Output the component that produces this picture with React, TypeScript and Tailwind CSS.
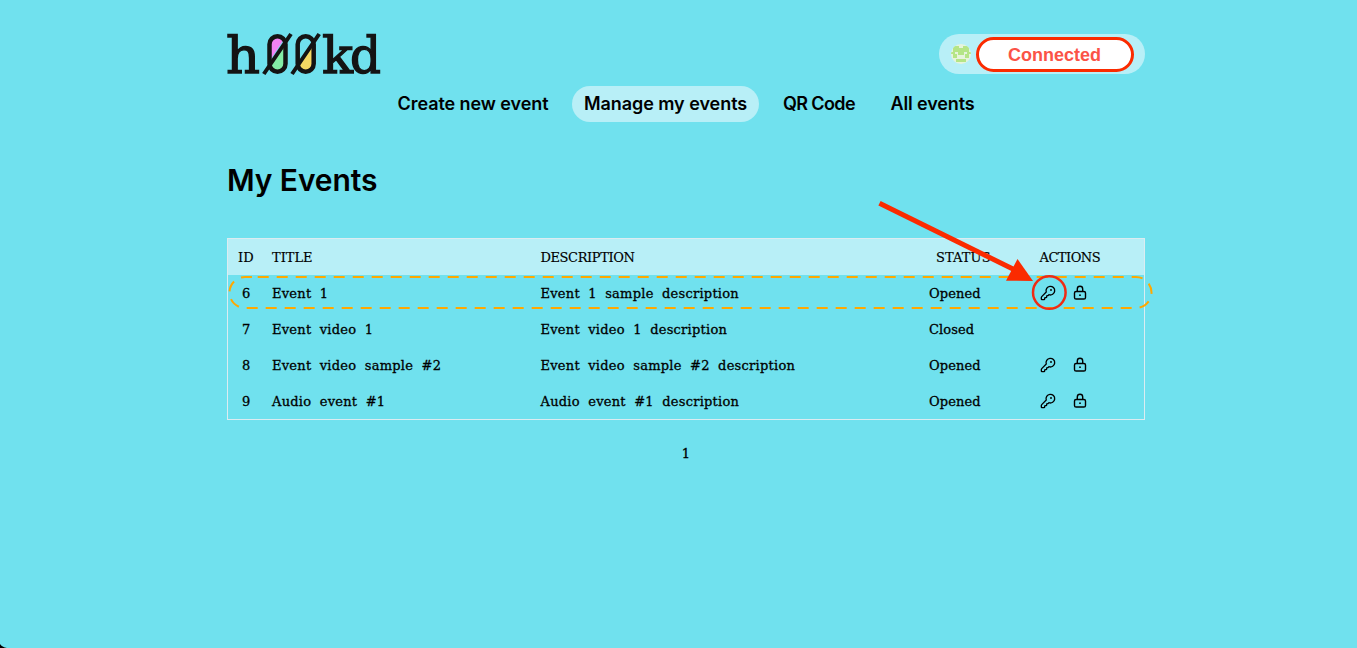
import { LuKeyRound } from "react-icons/lu";

type EventRow = {
  id: number;
  title: string;
  description: string;
  status: "Opened" | "Closed";
};

const EVENTS: EventRow[] = [
  { id: 6, title: "Event 1", description: "Event 1 sample description", status: "Opened" },
  { id: 7, title: "Event video 1", description: "Event video 1 description", status: "Closed" },
  { id: 8, title: "Event video sample #2", description: "Event video sample #2 description", status: "Opened" },
  { id: 9, title: "Audio event #1", description: "Audio event #1 description", status: "Opened" },
];

const NAV = [
  { label: "Create new event", style: "w-[174px] tracking-[-0.08px]" },
  { label: "Manage my events", style: "w-[187px] bg-[#b8eff7] tracking-[-0.05px]" },
  { label: "QR Code", style: "w-[96px] tracking-[-0.6px]" },
  { label: "All events", style: "w-[107px] tracking-[-0.15px]" },
];

const COLUMNS = "grid grid-cols-[44px_268.500px_388.500px_110.500px_1fr] items-center pt-0.5";

function Logo() {
  return (
    <svg width="160" height="64" viewBox="-2 -10 160 64" className="-ml-1 block shrink-0" aria-label="h00kd">
      <g fill="#141414" stroke="#141414" strokeWidth="1.300" fontFamily="'DejaVu Serif', serif" fontSize="50">
        <text x="1" y="41" textLength="34" lengthAdjust="spacingAndGlyphs">h</text>
        <text x="97" y="41" textLength="31" lengthAdjust="spacingAndGlyphs">k</text>
        <text x="125" y="41" textLength="31" lengthAdjust="spacingAndGlyphs">d</text>
      </g>
      <path d="M44 30V12q0-7 7.500-7 5 0 7 3Z" fill="#f183f3" />
      <path d="M60 12v20q0 7-7.500 7-6 0-8-5Z" fill="#83eda6" />
      <path d="M88 12v20q0 7-7.500 7-6 0-8-5Z" fill="#f5d963" />
      <g fill="none" stroke="#141414" strokeWidth="4.500">
        <rect x="44.500" y="4.300" width="16" height="35.500" rx="8" />
        <rect x="72.700" y="4.300" width="16" height="35.500" rx="8" />
        <path d="M38.800 42 66 2M67 42 94.200 2" strokeWidth="4" />
      </g>
    </svg>
  );
}

function Avatar() {
  return (
    <svg width="20" height="20" viewBox="0 0 20 20" className="block">
      <clipPath id="avatar">
        <circle cx="10" cy="10" r="10" />
      </clipPath>
      <g clipPath="url(#avatar)">
        <path fill="#e6f4dc" d="M0 0h20v20H0z" />
        <path
          fill="#b5e586"
          d="M2 2h6v2h4V2h6v6h2v2h-2v2h-4v-2h2V8h-3v3H7V8H4v2h2v2H2v-2H0V8h2zM5 15h10v3H5zM2 12h4v2H2zM14 12h4v2h-4z"
        />
      </g>
    </svg>
  );
}

function LockIcon() {
  return (
    <svg width="16" height="16" viewBox="0 0 16 16" fill="none" stroke="black" strokeWidth="1.400" className="block">
      <rect x="2.500" y="6.500" width="11" height="7.500" rx="1.600" />
      <path d="M5.300 6.500V4a2.700 2.700 0 0 1 5.400 0v2.500" />
      <circle cx="8" cy="10.200" r="0.900" fill="black" stroke="none" />
    </svg>
  );
}

function Highlights() {
  return (
    <svg width="290" height="125" viewBox="870 195 290 125" className="pointer-events-none absolute left-[870px] top-[195px]">
      <path d="M879.500 203.300 1016 270.500" stroke="#fb2b00" strokeWidth="5" />
      <path d="m1017.500 259 15.500 22-27-.3Z" fill="#fb2b00" />
      <circle cx="1049.300" cy="292.500" r="16.300" fill="none" stroke="#ef2b14" strokeWidth="2.500" />
    </svg>
  );
}

function RowOutline() {
  return (
    <svg width="930" height="40" viewBox="226 273 930 40" className="pointer-events-none absolute left-[226px] top-[273px]">
      <path
        d="M257.700 277H1136a15.500 15.500 0 0 1 0 31H245a15.500 15.500 0 0 1 0-31Z"
        fill="none"
        stroke="#ffa800"
        strokeWidth="2"
        strokeDasharray="11 8"
      />
    </svg>
  );
}

export default function App() {
  return (
    <div className="relative h-[648px] w-full overflow-hidden bg-[#70e1ee] text-black">
      <div className="ml-[227px] w-[918px] pt-8">
        <header className="flex h-11 items-center justify-between">
          <Logo />
          <div className="flex h-10 w-[206px] items-center rounded-full bg-[#b8eff7] pl-3">
            <Avatar />
            <div className="ml-[5px] flex h-[35px] w-[158px] items-center justify-center rounded-full border-3 border-[#fb2b00] bg-white pr-px pt-0.5 font-['Liberation_Sans',sans-serif] text-[18px] font-bold text-[#fb5347]">
              Connected
            </div>
          </div>
        </header>

        <nav className="mt-2.5 flex h-9 justify-center gap-3 font-['Inter',sans-serif] text-[18px] font-semibold">
          {NAV.map((item) => (
            <a key={item.label} className={`flex items-center justify-center whitespace-nowrap rounded-full pb-px ${item.style}`}>
              {item.label}
            </a>
          ))}
        </nav>

        <h1 className="mt-10 font-['Inter',sans-serif] text-[30px] font-semibold leading-9 tracking-[-0.1px]">My Events</h1>

        <div className="mt-10 border border-[#dcecf1] font-['DejaVu_Serif',serif] text-[13px]">
          <div className={`${COLUMNS} h-9 bg-[#b8eff7] [-webkit-text-stroke:0.15px_black]`}>
            <span className="pl-2.5">ID</span>
            <span>TITLE</span>
            <span className="tracking-[-0.4px]">DESCRIPTION</span>
            <span className="pl-[7px] tracking-[0.1px]">STATUS</span>
            <span className="tracking-[-0.5px]">ACTIONS</span>
          </div>
          {EVENTS.map((event) => (
            <div
              key={event.id}
              className={`${COLUMNS} h-9 tracking-[0.25px] [word-spacing:4px] [-webkit-text-stroke:0.3px_black]`}
            >
              <span className="pl-3.5">{event.id}</span>
              <span>{event.title}</span>
              <span>{event.description}</span>
              <span className="tracking-[0.1px]">{event.status}</span>
              {event.status === "Opened" && (
                <span className="flex gap-4 pb-0.5">
                  <LuKeyRound size={16} />
                  <LockIcon />
                </span>
              )}
            </div>
          ))}
        </div>

        <div className="mt-6 text-center font-['DejaVu_Serif',serif] text-[13px] leading-5 [-webkit-text-stroke:0.3px_black]">1</div>
      </div>

      <RowOutline />
      <Highlights />
      <svg width="7" height="4" className="absolute bottom-0 left-0">
        <path d="M0 0q2 3 7 4H0Z" fill="black" />
      </svg>
    </div>
  );
}
